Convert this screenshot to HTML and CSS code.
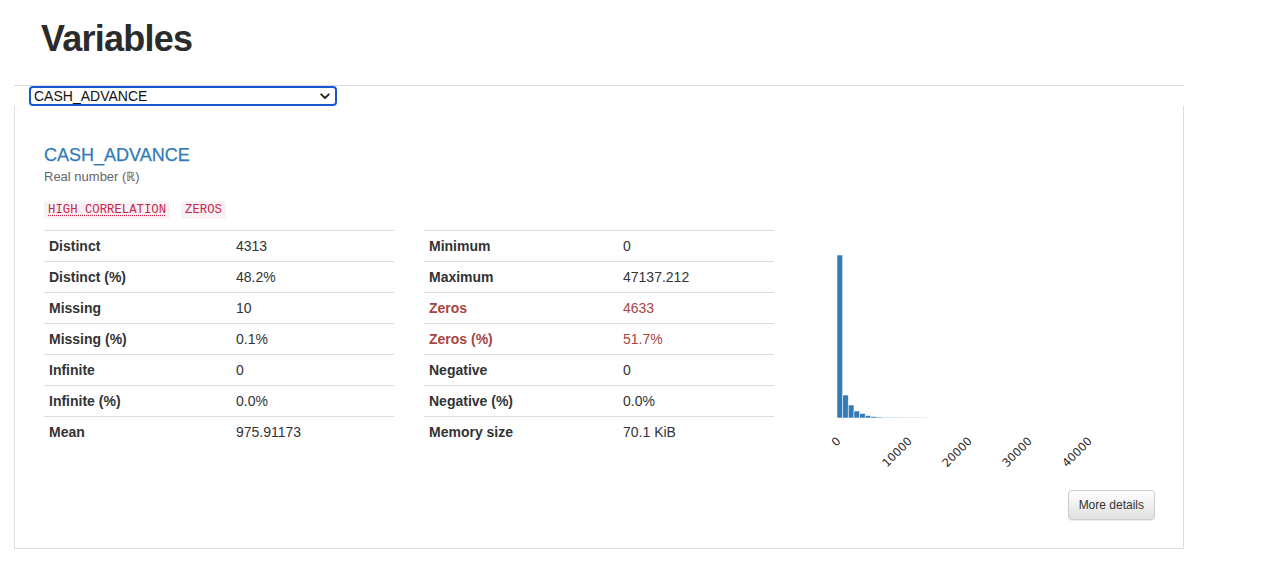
FILE: index.html
```html
<!DOCTYPE html>
<html>
<head>
<meta charset="utf-8">
<link rel="stylesheet" href="styles.css">
</head>
<body>
<div class="page">
  <div class="page-header">
    <h1 class="title">Variables</h1>
  </div>
  <div class="select-wrap">
    <select class="var-select">
      <option>CASH_ADVANCE</option>
    </select>
    <svg class="chev" width="10" height="7" viewBox="0 0 10 7"><path d="M1.2 1.3 L5 5 L8.8 1.3" fill="none" stroke="#222" stroke-width="1.8" stroke-linecap="round" stroke-linejoin="round"/></svg>
  </div>
  <div class="card">
    <div class="var-head">
      <div class="var-name">CASH_ADVANCE</div>
      <div class="var-type">Real number (ℝ)</div>
      <div class="badges">
        <code class="badge"><abbr class="abbr">HIGH CORRELATION</abbr></code>
        <code class="badge">ZEROS</code>
      </div>
    </div>
    <div class="stats">
      <table class="tbl tbl-a">
        <tr><th>Distinct</th><td>4313</td></tr>
        <tr><th>Distinct (%)</th><td>48.2%</td></tr>
        <tr><th>Missing</th><td>10</td></tr>
        <tr><th>Missing (%)</th><td>0.1%</td></tr>
        <tr><th>Infinite</th><td>0</td></tr>
        <tr><th>Infinite (%)</th><td>0.0%</td></tr>
        <tr><th>Mean</th><td>975.91173</td></tr>
      </table>
      <table class="tbl tbl-b">
        <tr><th>Minimum</th><td>0</td></tr>
        <tr><th>Maximum</th><td>47137.212</td></tr>
        <tr class="alert"><th>Zeros</th><td>4633</td></tr>
        <tr class="alert"><th>Zeros (%)</th><td>51.7%</td></tr>
        <tr><th>Negative</th><td>0</td></tr>
        <tr><th>Negative (%)</th><td>0.0%</td></tr>
        <tr><th>Memory size</th><td>70.1 KiB</td></tr>
      </table>
      <div class="hist">
        <svg width="350" height="250" viewBox="0 0 350 250">
          <g fill="#337ab7" stroke="#ffffff" stroke-opacity="0.7" stroke-width="0.8">
            <rect x="33" y="25" width="5.66" height="163"/>
            <rect x="38.66" y="165" width="5.66" height="23"/>
            <rect x="44.32" y="175" width="5.66" height="13"/>
            <rect x="49.98" y="181" width="5.66" height="7"/>
            <rect x="55.64" y="183.5" width="5.66" height="4.5"/>
            <rect x="61.3" y="185.5" width="5.66" height="2.5"/>
            <rect x="66.96" y="186.5" width="5.66" height="1.5"/>
            <rect x="72.62" y="187" width="5.66" height="1"/>
            <rect x="78.28" y="187.3" width="5.66" height="0.7"/>
            <rect x="83.94" y="187.4" width="5.66" height="0.6"/>
            <rect x="89.6" y="187.5" width="5.66" height="0.5"/>
            <rect x="95.26" y="187.6" width="5.66" height="0.4"/>
            <rect x="100.92" y="187.6" width="5.66" height="0.4"/>
            <rect x="106.58" y="187.7" width="5.66" height="0.3"/>
            <rect x="112.24" y="187.7" width="5.66" height="0.3"/>
            <rect x="117.9" y="187.8" width="5.66" height="0.2"/>
          </g>
          <g class="ticks" font-family="DejaVu Sans, sans-serif" font-size="11.5" fill="#262626" text-anchor="middle">
            <text x="32" y="215.5" transform="rotate(-45 32 211.5)">0</text>
            <text x="93" y="226" transform="rotate(-45 93 222)">10000</text>
            <text x="153" y="226" transform="rotate(-45 153 222)">20000</text>
            <text x="213" y="226" transform="rotate(-45 213 222)">30000</text>
            <text x="273" y="226" transform="rotate(-45 273 222)">40000</text>
          </g>
        </svg>
      </div>
    </div>
    <div class="actions">
      <button class="btn">More details</button>
    </div>
  </div>
</div>
</body>
</html>
```
FILE: styles.css
```css
html, body {
  margin: 0;
  padding: 0;
  background: #ffffff;
}
body {
  font-family: "Liberation Sans", Arial, sans-serif;
  font-size: 14px;
  line-height: 20px;
  color: #333333;
}
.page {
  margin-left: 14px;
  width: 1170px;
}
.page-header {
  border-bottom: 1px solid #dddde2;
  padding-left: 27px;
  padding-top: 19px;
  height: 66px;
}
.title {
  margin: 0;
  font-size: 36px;
  line-height: 40px;
  font-weight: 700;
  letter-spacing: -0.75px;
  color: #2b2b2b;
}
.select-wrap {
  position: relative;
  display: block;
  width: 308px;
  height: 20px;
  margin-left: 15px;
}
.var-select {
  -webkit-appearance: none;
  appearance: none;
  display: block;
  box-sizing: border-box;
  width: 308px;
  height: 20px;
  margin: 0;
  padding: 0 20px 0 3px;
  border: 2px solid #1558d0;
  border-radius: 4px;
  background: #ffffff;
  font-family: "Liberation Sans", Arial, sans-serif;
  font-size: 14px;
  line-height: 16px;
  color: #111111;
  outline: none;
}
.chev {
  position: absolute;
  right: 7px;
  top: 7px;
  pointer-events: none;
}
.card {
  box-sizing: border-box;
  width: 1170px;
  border: 1px solid #dddde2;
  border-top: none;
  padding: 39px 28px 28px 29px;
}
.var-name {
  font-size: 18px;
  line-height: 20px;
  color: #337ab7;
  -webkit-text-stroke: 0.25px #337ab7;
}
.var-type {
  margin-top: 3px;
  font-size: 13px;
  line-height: 18px;
  color: #666666;
}
.badges {
  display: flex;
  gap: 11px;
  margin-top: 15px;
}
.badge {
  display: inline-block;
  padding: 2px 4px;
  font-family: "Liberation Mono", "DejaVu Sans Mono", monospace;
  font-size: 12.3px;
  line-height: 14px;
  color: #c7254e;
  background: #f9f2f4;
  border-radius: 4px;
}
.abbr {
  text-decoration: underline dotted #c7254e;
  text-underline-offset: 2px;
}
.stats {
  display: grid;
  grid-template-columns: 350px 350px 350px;
  column-gap: 30px;
  align-items: start;
  margin-top: 11px;
}
.tbl {
  border-collapse: collapse;
  width: 350px;
}
.tbl th, .tbl td {
  padding: 5px;
  line-height: 20px;
  text-align: left;
  vertical-align: top;
  border-top: 1px solid #dddddd;
}
.tbl th {
  font-weight: 700;
}
.tbl-a th { width: 177px; }
.tbl-b th { width: 184px; }
.tbl tr.alert th, .tbl tr.alert td {
  color: #a94442;
}
.hist {
  height: 250px;
}
.hist svg {
  display: block;
}
.actions {
  display: flex;
  justify-content: flex-end;
  margin-top: 10px;
}
.btn {
  box-sizing: border-box;
  height: 30px;
  padding: 5px 10px;
  font-family: "Liberation Sans", Arial, sans-serif;
  font-size: 12px;
  line-height: 18px;
  color: #333333;
  background: linear-gradient(#ffffff, #e0e0e0);
  border: 1px solid #cccccc;
  border-radius: 4px;
  box-shadow: inset 0 1px 0 rgba(255,255,255,.15), 0 1px 1px rgba(0,0,0,.075);
}
```
